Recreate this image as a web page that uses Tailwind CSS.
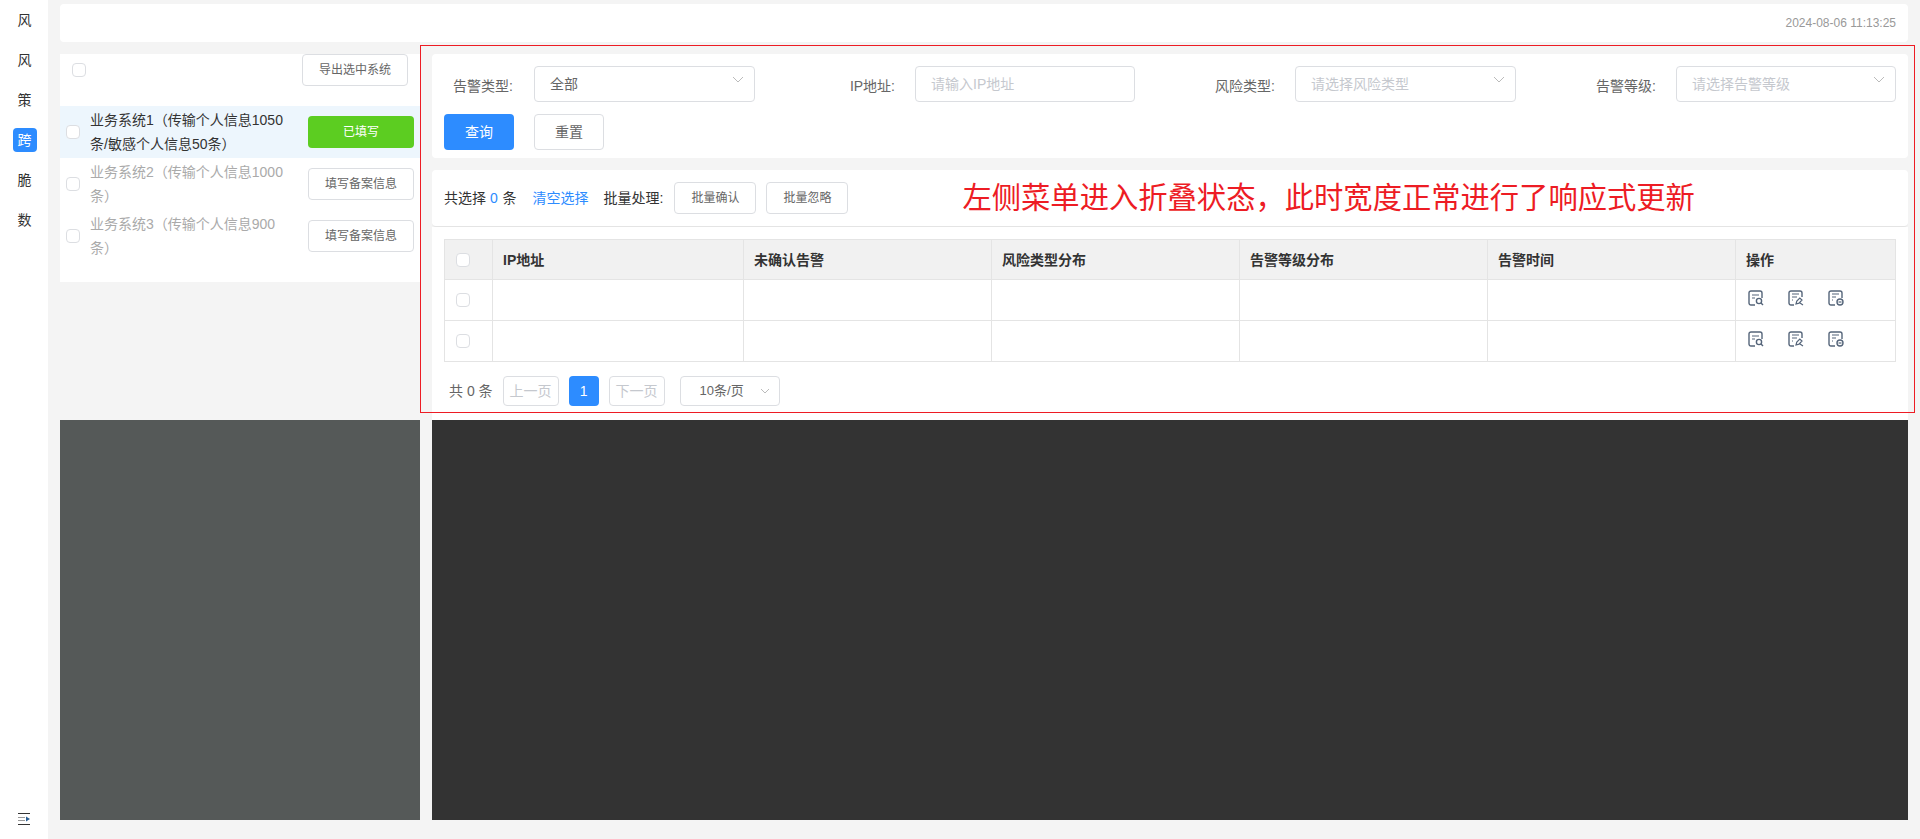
<!DOCTYPE html>
<html lang="zh-CN">

<head>
    <meta charset="UTF-8">
    <title>跨境风险</title>
    <script src="https://cdn.jsdelivr.net/npm/@tailwindcss/browser@4"></script>
</head>

<body class="relative h-[839px] overflow-hidden bg-[#f4f4f4] font-['Liberation_Sans','Noto_Sans_CJK_SC',sans-serif] text-sm text-[#333]">
    <div class="flex h-full">
        <!-- 折叠菜单 -->
        <div class="flex h-full w-12 flex-col items-center bg-white pl-px pt-2">
            <div class="flex h-6 w-6 items-center justify-center">风</div>
            <div class="mt-4 flex h-6 w-6 items-center justify-center">风</div>
            <div class="mt-4 flex h-6 w-6 items-center justify-center">策</div>
            <div class="mt-4 flex h-6 w-6 items-center justify-center rounded bg-[#2d8cff] text-white">跨</div>
            <div class="mt-4 flex h-6 w-6 items-center justify-center">脆</div>
            <div class="mt-4 flex h-6 w-6 items-center justify-center">数</div>
            <svg class="mt-auto mb-[14px] -ml-px" width="12" height="12" viewBox="0 0 12 12" fill="none">
                <path d="M0 .5h12M0 11.5h12" stroke="#333" />
                <path d="M0 4.5h7M0 7.5h7" stroke="#999" />
                <path d="M8 3.5 12 6 8 8.5z" fill="#2b5f94" />
            </svg>
        </div>

        <!-- 内容 -->
        <div class="flex-1 px-3 pt-1">
            <div class="flex h-[38px] items-center justify-end rounded bg-white px-3 text-xs text-[#999]">2024-08-06 11:13:25</div>

            <div class="mt-3 flex h-[366px] gap-3">
                <!-- 系统列表 -->
                <div class="h-[228px] w-[360px] bg-white">
                    <div class="flex h-[52px] items-start justify-between pl-3 pr-3">
                        <span class="mt-[9px] h-3.5 w-3.5 rounded-sm border border-[#dcdee2] bg-white"></span>
                        <button class="h-8 w-[106px] rounded border border-[#dcdee2] text-xs text-[#666]">导出选中系统</button>
                    </div>
                    <div class="flex h-[52px] items-center bg-[#edf6fd] pl-1.5 pr-1.5">
                        <span class="h-3.5 w-3.5 shrink-0 rounded-sm border border-[#dcdee2] bg-white"></span>
                        <p class="ml-2.5 w-[196px] leading-6">业务系统1（传输个人信息1050条/敏感个人信息50条）</p>
                        <button class="ml-auto h-8 w-[106px] rounded bg-[#5ccd21] text-xs text-white">已填写</button>
                    </div>
                    <div class="flex h-[52px] items-center pl-1.5 pr-1.5">
                        <span class="h-3.5 w-3.5 shrink-0 rounded-sm border border-[#dcdee2] bg-white"></span>
                        <p class="ml-2.5 w-[196px] leading-6 text-[#aaa]">业务系统2（传输个人信息1000条）</p>
                        <button class="ml-auto h-8 w-[106px] rounded border border-[#dcdee2] text-xs text-[#666]">填写备案信息</button>
                    </div>
                    <div class="flex h-[52px] items-center pl-1.5 pr-1.5">
                        <span class="h-3.5 w-3.5 shrink-0 rounded-sm border border-[#dcdee2] bg-white"></span>
                        <p class="ml-2.5 w-[196px] leading-6 text-[#aaa]">业务系统3（传输个人信息900条）</p>
                        <button class="ml-auto h-8 w-[106px] rounded border border-[#dcdee2] text-xs text-[#666]">填写备案信息</button>
                    </div>
                </div>

                <div class="flex-1">
                    <!-- 查询条件 -->
                    <div class="h-[104px] rounded bg-white px-3 pt-3">
                        <div class="flex h-9 items-center">
                            <label class="w-[69px] shrink-0 whitespace-nowrap pt-1 text-right text-[#666]">告警类型:</label>
                            <div class="ml-[21px] flex h-9 w-[221px] shrink-0 items-center justify-between rounded border border-[#dcdee2] pl-[15px] pr-2.5 text-[#666]">
                                全部
                                <svg class="mb-2" width="12" height="8" viewBox="0 0 12 8" fill="none"><path d="m1 1 5 5 5-5" stroke="#bbb" /></svg>
                            </div>
                            <label class="ml-[92px] w-[48px] shrink-0 whitespace-nowrap pt-1 text-right text-[#666]">IP地址:</label>
                            <div class="ml-[20px] flex h-9 w-[220px] shrink-0 items-center rounded border border-[#dcdee2] pl-[15px] text-[#c5c8ce]">请输入IP地址</div>
                            <label class="ml-[78px] w-[62px] shrink-0 whitespace-nowrap pt-1 text-right text-[#666]">风险类型:</label>
                            <div class="ml-[20px] flex h-9 w-[221px] shrink-0 items-center justify-between rounded border border-[#dcdee2] pl-[15px] pr-2.5 text-[#c5c8ce]">
                                请选择风险类型
                                <svg class="mb-2" width="12" height="8" viewBox="0 0 12 8" fill="none"><path d="m1 1 5 5 5-5" stroke="#bbb" /></svg>
                            </div>
                            <label class="ml-[78px] w-[62px] shrink-0 whitespace-nowrap pt-1 text-right text-[#666]">告警等级:</label>
                            <div class="ml-[20px] flex h-9 w-[220px] shrink-0 items-center justify-between rounded border border-[#dcdee2] pl-[15px] pr-2.5 text-[#c5c8ce]">
                                请选择告警等级
                                <svg class="mb-2" width="12" height="8" viewBox="0 0 12 8" fill="none"><path d="m1 1 5 5 5-5" stroke="#bbb" /></svg>
                            </div>
                        </div>
                        <div class="mt-3 flex gap-5">
                            <button class="h-9 w-[70px] rounded bg-[#2d8cff] text-white">查询</button>
                            <button class="h-9 w-[70px] rounded border border-[#dcdee2] text-[#666]">重置</button>
                        </div>
                    </div>

                    <!-- 批量操作 -->
                    <div class="mt-3 flex h-[57px] items-center rounded border-b border-[#e4e4e4] bg-white pb-[1px] pl-3">
                        <span>共选择 <span class="text-[#2d8cff]">0</span> <span class="ml-px">条</span></span>
                        <span class="ml-4 text-[#2d8cff]">清空选择</span>
                        <span class="ml-[15px]">批量处理:</span>
                        <button class="ml-[11px] h-8 w-[82px] rounded border border-[#dcdee2] text-xs text-[#666]">批量确认</button>
                        <button class="ml-2.5 h-8 w-[82px] rounded border border-[#dcdee2] text-xs text-[#666]">批量忽略</button>
                        <span class="ml-[114px] whitespace-nowrap text-[29.3px] leading-none text-[#ed1c24]">左侧菜单进入折叠状态，此时宽度正常进行了响应式更新</span>
                    </div>

                    <!-- 列表 -->
                    <div class="h-[193px] bg-white px-3 pt-3">
                        <table class="w-[1452px] table-fixed border-collapse">
                            <thead>
                                <tr class="h-[40px] bg-[#f1f1f1] text-left font-semibold">
                                    <th class="w-12 border border-[#e4e4e4] pl-[11px]"><span class="block h-3.5 w-3.5 rounded-sm border border-[#dcdee2] bg-white"></span></th>
                                    <th class="w-[251px] border border-[#e4e4e4] pl-2.5 font-semibold">IP地址</th>
                                    <th class="w-[248px] border border-[#e4e4e4] pl-2.5 font-semibold">未确认告警</th>
                                    <th class="w-[248px] border border-[#e4e4e4] pl-2.5 font-semibold">风险类型分布</th>
                                    <th class="w-[248px] border border-[#e4e4e4] pl-2.5 font-semibold">告警等级分布</th>
                                    <th class="w-[248px] border border-[#e4e4e4] pl-2.5 font-semibold">告警时间</th>
                                    <th class="border border-[#e4e4e4] pl-2.5 font-semibold">操作</th>
                                </tr>
                            </thead>
                            <tbody>
                                <tr class="h-[41px]">
                                    <td class="border border-[#e4e4e4] pl-[11px]"><span class="block h-3.5 w-3.5 rounded-sm border border-[#dcdee2]"></span></td>
                                    <td class="border border-[#e4e4e4]"></td>
                                    <td class="border border-[#e4e4e4]"></td>
                                    <td class="border border-[#e4e4e4]"></td>
                                    <td class="border border-[#e4e4e4]"></td>
                                    <td class="border border-[#e4e4e4]"></td>
                                    <td class="border border-[#e4e4e4] pl-3">
                                        <div class="mb-1 flex gap-6">
                                            <svg width="16" height="16" viewBox="0 0 16 16" fill="none"><path d="M7 15H3a2 2 0 0 1-2-2V3a2 2 0 0 1 2-2h9a2 2 0 0 1 2 2v5" stroke="#55657a" stroke-width="1.4" /><path d="M4 5h7M4 8h3" stroke="#55657a" stroke-width="1.2" /><circle cx="11" cy="11" r="2.6" stroke="#55657a" stroke-width="1.4" /><path d="m13 13 2 2" stroke="#55657a" stroke-width="1.4" /></svg>
                                            <svg width="16" height="16" viewBox="0 0 16 16" fill="none"><path d="M6 15H3a2 2 0 0 1-2-2V3a2 2 0 0 1 2-2h9a2 2 0 0 1 2 2v4" stroke="#55657a" stroke-width="1.4" /><path d="M4 4h7M4 7h5M4 10h1" stroke="#55657a" stroke-width="1.2" /><path d="m8 14 .8-3 3-3 2.2 2-3 3.2zM12 13l3 2" stroke="#55657a" stroke-width="1.2" /></svg>
                                            <svg width="16" height="16" viewBox="0 0 16 16" fill="none"><path d="M7 15H3a2 2 0 0 1-2-2V3a2 2 0 0 1 2-2h9a2 2 0 0 1 2 2v5" stroke="#55657a" stroke-width="1.4" /><path d="M4 4h7M4 7h4M4 10h1" stroke="#55657a" stroke-width="1.2" /><circle cx="12" cy="12" r="3" stroke="#55657a" stroke-width="1.4" /><path d="M10.5 12h3" stroke="#55657a" stroke-width="1.2" /></svg>
                                        </div>
                                    </td>
                                </tr>
                                <tr class="h-[41px]">
                                    <td class="border border-[#e4e4e4] pl-[11px]"><span class="block h-3.5 w-3.5 rounded-sm border border-[#dcdee2]"></span></td>
                                    <td class="border border-[#e4e4e4]"></td>
                                    <td class="border border-[#e4e4e4]"></td>
                                    <td class="border border-[#e4e4e4]"></td>
                                    <td class="border border-[#e4e4e4]"></td>
                                    <td class="border border-[#e4e4e4]"></td>
                                    <td class="border border-[#e4e4e4] pl-3">
                                        <div class="mb-1 flex gap-6">
                                            <svg width="16" height="16" viewBox="0 0 16 16" fill="none"><path d="M7 15H3a2 2 0 0 1-2-2V3a2 2 0 0 1 2-2h9a2 2 0 0 1 2 2v5" stroke="#55657a" stroke-width="1.4" /><path d="M4 5h7M4 8h3" stroke="#55657a" stroke-width="1.2" /><circle cx="11" cy="11" r="2.6" stroke="#55657a" stroke-width="1.4" /><path d="m13 13 2 2" stroke="#55657a" stroke-width="1.4" /></svg>
                                            <svg width="16" height="16" viewBox="0 0 16 16" fill="none"><path d="M6 15H3a2 2 0 0 1-2-2V3a2 2 0 0 1 2-2h9a2 2 0 0 1 2 2v4" stroke="#55657a" stroke-width="1.4" /><path d="M4 4h7M4 7h5M4 10h1" stroke="#55657a" stroke-width="1.2" /><path d="m8 14 .8-3 3-3 2.2 2-3 3.2zM12 13l3 2" stroke="#55657a" stroke-width="1.2" /></svg>
                                            <svg width="16" height="16" viewBox="0 0 16 16" fill="none"><path d="M7 15H3a2 2 0 0 1-2-2V3a2 2 0 0 1 2-2h9a2 2 0 0 1 2 2v5" stroke="#55657a" stroke-width="1.4" /><path d="M4 4h7M4 7h4M4 10h1" stroke="#55657a" stroke-width="1.2" /><circle cx="12" cy="12" r="3" stroke="#55657a" stroke-width="1.4" /><path d="M10.5 12h3" stroke="#55657a" stroke-width="1.2" /></svg>
                                        </div>
                                    </td>
                                </tr>
                            </tbody>
                        </table>
                        <!-- 分页 -->
                        <div class="mt-[14px] flex items-center pl-[5px] text-[#666]">
                            <span class="mr-2.5">共 0 条</span>
                            <span class="flex h-[30px] w-14 items-center justify-center rounded border border-[#dcdee2] text-[#c5c8ce]">上一页</span>
                            <span class="ml-2.5 flex h-[30px] w-[30px] items-center justify-center rounded bg-[#2d8cff] text-white">1</span>
                            <span class="ml-2.5 flex h-[30px] w-14 items-center justify-center rounded border border-[#dcdee2] text-[#c5c8ce]">下一页</span>
                            <span class="ml-[15px] flex h-[30px] w-[100px] items-center justify-between rounded border border-[#dcdee2] pl-[19px] pr-[9px] text-[13px]">
                                10条/页
                                <svg width="10" height="6" viewBox="0 0 10 6" fill="none"><path d="m1 1 4 4 4-4" stroke="#bbb" /></svg>
                            </span>
                        </div>
                    </div>
                </div>
            </div>

            <!-- 图表占位 -->
            <div class="flex h-[400px] gap-3">
                <div class="w-[360px] bg-[#555958]"></div>
                <div class="flex-1 bg-[#333333]"></div>
            </div>
        </div>
    </div>

    <!-- 标注框 -->
    <div class="absolute left-[420px] top-[45px] h-[368px] w-[1495px] border border-[#ed1c24]"></div>
</body>

</html>
